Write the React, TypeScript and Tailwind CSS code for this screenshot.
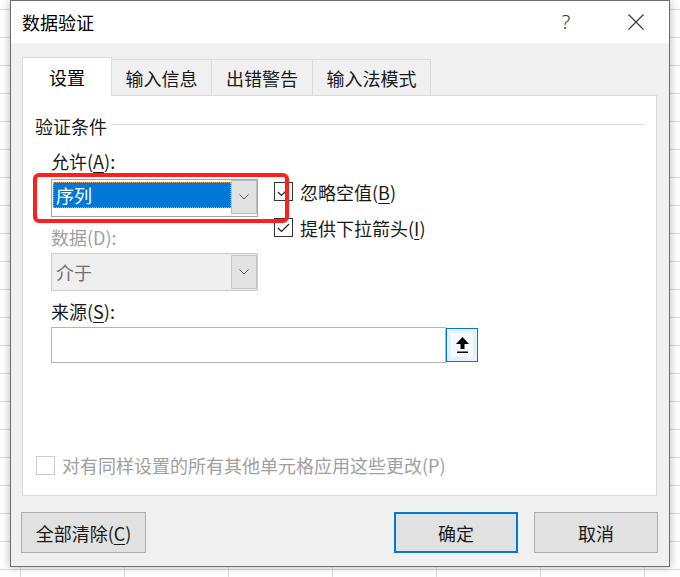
import React from "react";

const font = "font-['Noto_Sans_CJK_SC','Noto_Sans',sans-serif]";

function Chevron() {
  return (
    <svg width="10" height="6" viewBox="0 0 10 6">
      <path d="M0.5 0.5 L5 5 L9.5 0.5" fill="none" stroke="#555" strokeWidth="1" />
    </svg>
  );
}

function Checkbox({ checked, disabled }: { checked?: boolean; disabled?: boolean }) {
  return (
    <div
      className={`flex h-[19px] w-[19px] items-center justify-center border bg-white ${
        disabled ? "border-[#cccccc]" : "border-[#333333]"
      }`}
    >
      {checked && (
        <svg width="13" height="10" viewBox="0 0 13 10">
          <path d="M1 5 L4.5 8.5 L12 1" fill="none" stroke="#222" strokeWidth="1.2" />
        </svg>
      )}
    </div>
  );
}

function Key({ children }: { children: React.ReactNode }) {
  return <span className="underline underline-offset-[3px]">{children}</span>;
}

export default function App() {
  return (
    <div
      className={`h-[577px] w-[680px] overflow-hidden bg-white bg-[repeating-linear-gradient(90deg,#dadada_0_1px,transparent_1px_104px),repeating-linear-gradient(180deg,#dadada_0_1px,transparent_1px_28px)] bg-[position:20px_9px] pl-[10px] ${font}`}
    >
      <div className="flex h-[567px] w-[660px] flex-col border border-[#6e6e6e] bg-[#f0f0f0] shadow-[0_0_8px_rgba(0,0,0,0.3)]">
        {/* title bar */}
        <div className="flex h-[42px] items-center bg-white pl-[11px]">
          <span className="text-[18px] leading-none text-black">数据验证</span>
          <span className="ml-auto w-[20px] text-center font-['Noto_Sans',sans-serif] text-[20px] font-light leading-none text-[#333]">
            ?
          </span>
          <svg className="ml-[52px] mr-[25px]" width="16" height="16" viewBox="0 0 16 16">
            <path d="M0.5 0.5 L15.5 15.5 M15.5 0.5 L0.5 15.5" stroke="#333" strokeWidth="1.1" />
          </svg>
        </div>

        <div className="flex flex-1 flex-col px-[11px] pt-[14px]">
          {/* tabs */}
          <div className="flex h-[38px] items-end text-[18px] leading-none text-[#1a1a1a]">
            <div className="relative z-10 mb-[-1px] flex h-[39px] w-[90px] items-center justify-center border-x border-t border-[#dadada] bg-white text-black">
              设置
            </div>
            <div className="flex h-[36px] w-[100px] items-center justify-center border-r border-t border-[#dadada]">
              输入信息
            </div>
            <div className="flex h-[36px] w-[101px] items-center justify-center border-r border-t border-[#dadada]">
              出错警告
            </div>
            <div className="flex h-[36px] w-[118px] items-center justify-center border-r border-t border-[#dadada]">
              输入法模式
            </div>
          </div>

          {/* panel */}
          <div className="relative flex h-[401px] w-[635px] flex-col border border-[#dadada] bg-white text-[18px] leading-none text-[#1a1a1a]">
            <div className="mt-[18px] flex h-[24px] items-center pl-[12px] pr-[11px]">
              <span>验证条件</span>
              <div className="ml-[5px] mt-[-4px] h-px flex-1 bg-[#dcdcdc]" />
            </div>

            <div className="flex flex-col pl-[28px]">
              <div className="mt-[11px] flex">
                <div className="flex w-[207px] flex-col">
                  <div className="flex h-[24px] items-center">
                    允许(<Key>A</Key>):
                  </div>
                  <div className="mt-[6px] flex h-[38px] border border-[#a6a6a6] bg-white">
                    <div className="flex-1 pl-px pt-[2px]">
                      <div className="flex h-[26px] items-center border border-dotted border-[#d9a05a] bg-[#0078d7] pl-[2px] text-white">
                        序列
                      </div>
                    </div>
                    <div className="flex h-[34px] w-[26px] items-center justify-center border border-[#bcbcbc] bg-[#e1e1e1]">
                      <Chevron />
                    </div>
                  </div>
                  <div className="mt-[8px] flex h-[24px] items-center text-[#a0a0a0]">数据(D):</div>
                  <div className="mt-[4px] flex h-[38px] border border-[#cccccc] bg-[#efefef]">
                    <div className="flex flex-1 items-center pl-[4px] text-[#707070]">介于</div>
                    <div className="flex h-[34px] w-[26px] items-center justify-center self-center border border-[#c4c4c4] bg-[#e3e3e3]">
                      <Chevron />
                    </div>
                  </div>
                </div>

                <div className="ml-[16px] flex flex-col pt-[33px]">
                  <div className="flex items-center gap-[7px]">
                    <Checkbox checked />
                    <span>
                      忽略空值(<Key>B</Key>)
                    </span>
                  </div>
                  <div className="mt-[17px] flex items-center gap-[7px]">
                    <Checkbox checked />
                    <span>
                      提供下拉箭头(<Key>I</Key>)
                    </span>
                  </div>
                </div>
              </div>

              <div className="mt-[8px] flex h-[24px] items-center">
                来源(<Key>S</Key>):
              </div>
              <div className="mt-[4px] flex items-center">
                <div className="h-[36px] w-[395px] border border-[#b4b4b4] bg-white" />
                <div className="flex h-[34px] w-[32px] items-center justify-center border border-[#0078d7] bg-[#e5f1fb] p-[4px]">
                  <div className="flex h-full w-full items-center justify-center bg-[#f7fbff]">
                    <svg width="13" height="17" viewBox="0 0 13 17">
                      <polygon points="6.5,0 13,7 8.5,7 8.5,12 4.5,12 4.5,7 0,7" fill="#000" />
                      <rect x="1" y="14.5" width="11" height="1.5" fill="#000" />
                    </svg>
                  </div>
                </div>
              </div>
            </div>

            <div className="mb-[20px] ml-[13px] mt-auto flex h-[20px] items-center gap-[7px] text-[#a0a0a0]">
              <Checkbox disabled />
              <span>对有同样设置的所有其他单元格应用这些更改(P)</span>
            </div>

            {/* annotation */}
            <div className="absolute left-[10px] top-[77px] h-[50px] w-[256px] rounded-[6px] border-4 border-[#ff1f1f]" />
          </div>

          {/* buttons */}
          <div className="mt-[16px] flex text-[18px] leading-none text-[#1a1a1a]">
            <button className="ml-[-1px] flex h-[41px] w-[125px] items-center justify-center border border-[#adadad] bg-[#e1e1e1]">
              全部清除(<Key>C</Key>)
            </button>
            <button className="ml-auto flex h-[41px] w-[124px] items-center justify-center border-2 border-[#0078d7] bg-[#e1e1e1]">
              确定
            </button>
            <button className="ml-[16px] flex h-[41px] w-[124px] items-center justify-center border border-[#adadad] bg-[#e1e1e1]">
              取消
            </button>
          </div>
        </div>
      </div>
    </div>
  );
}
